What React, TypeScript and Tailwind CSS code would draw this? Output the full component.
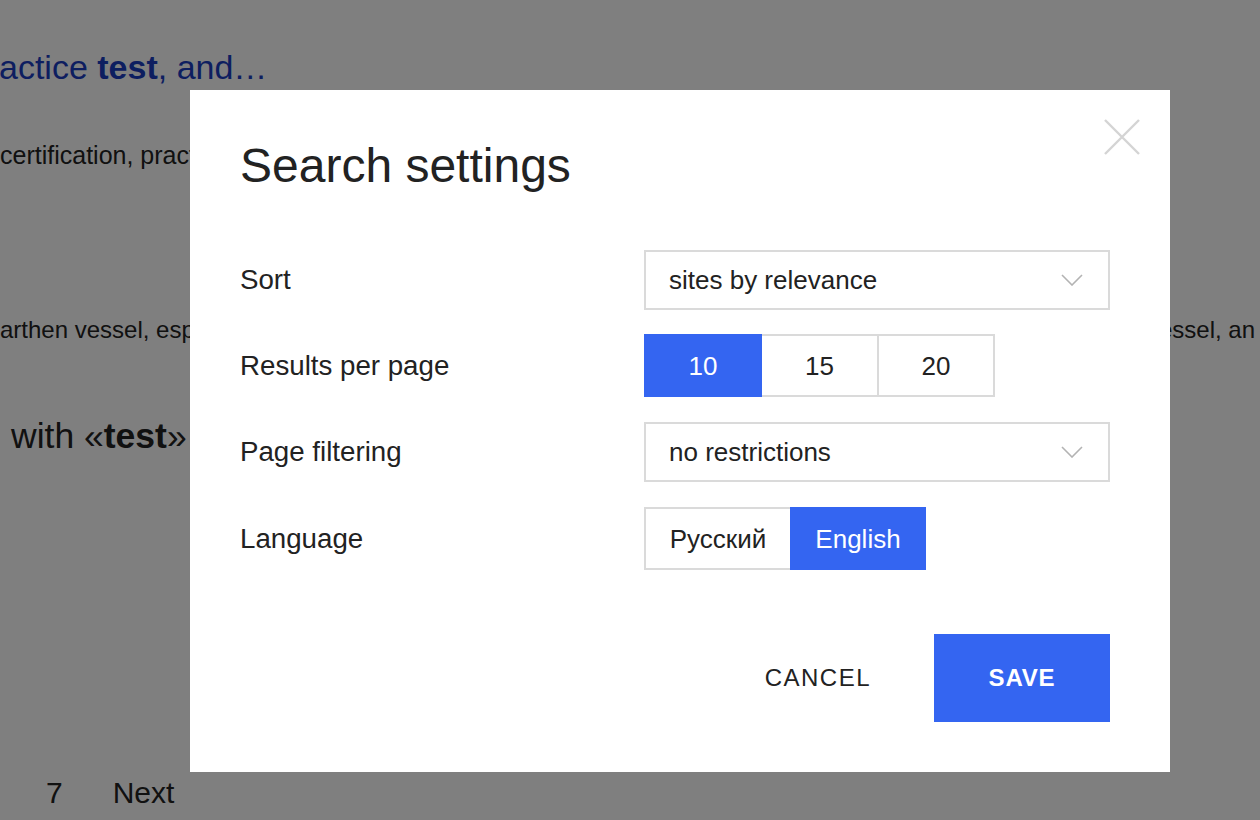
import React from "react";

const Chevron = () => (
  <svg width="22" height="12" viewBox="0 0 22 12" fill="none">
    <path d="M1 1 L11 11 L21 1" stroke="#b3b3b3" strokeWidth="1.6" />
  </svg>
);

const Select = ({ value }: { value: string }) => (
  <div className="flex h-[60px] w-[466px] items-center justify-between border-2 border-[#dadada] bg-white pl-[23px] pr-[25px] text-[26px] leading-none text-[#222]">
    <span>{value}</span>
    <Chevron />
  </div>
);

const Row = ({
  label,
  className,
  children,
}: {
  label: string;
  className?: string;
  children: React.ReactNode;
}) => (
  <div className={`flex items-center ${className ?? ""}`}>
    <div className="w-[404px] text-[27.7px] leading-none text-[#222]">{label}</div>
    {children}
  </div>
);

const App = () => {
  return (
    <div className="relative h-[820px] w-full overflow-hidden bg-white font-['Liberation_Sans',Arial,sans-serif]">
      {/* page behind the dialog */}
      <div className="flex flex-col whitespace-nowrap text-[#222]">
        <div className="-ml-[1px] mt-[50px] text-[34px] leading-none text-[#1a3dc1]">
          actice <b>test</b>, and…
        </div>
        <div className="mt-[59px] text-[25px] leading-none">certification, practice test</div>
        <div className="mt-[150px] flex justify-between text-[24px] leading-none">
          <span>arthen vessel, especially</span>
          <span className="mr-[5px]">vessel, an</span>
        </div>
        <div className="ml-[11px] mt-[77px] text-[35.5px] leading-none">
          with «<b>test</b>»
        </div>
        <div className="mt-[323px] flex text-[30px] leading-none">
          <span className="ml-[46px]">7</span>
          <span className="ml-[50px]">Next</span>
        </div>
      </div>

      {/* overlay */}
      <div className="absolute inset-0 bg-black/50 pl-[190px] pt-[90px]">
        <div className="relative h-[682px] w-[980px] bg-white pl-[50px] pr-[60px] pt-[52px]">
          <button className="absolute right-[30px] top-[29px]">
            <svg width="36" height="36" viewBox="0 0 36 36" fill="none">
              <path d="M1 1 L35 35 M35 1 L1 35" stroke="#d4d4d4" strokeWidth="2.4" />
            </svg>
          </button>

          <h1 className="text-[48px] leading-none text-[#222]">Search settings</h1>

          <Row label="Sort" className="mt-[60px]">
            <Select value="sites by relevance" />
          </Row>

          <Row label="Results per page" className="mt-[24px]">
            <div className="flex h-[63px] text-[26px] leading-none text-[#222]">
              <div className="flex w-[118px] items-center justify-center bg-[#3465f1] text-white">10</div>
              <div className="flex w-[117px] items-center justify-center border-y-2 border-r-2 border-[#dadada]">15</div>
              <div className="flex w-[116px] items-center justify-center border-y-2 border-r-2 border-[#dadada]">20</div>
            </div>
          </Row>

          <Row label="Page filtering" className="mt-[25px]">
            <Select value="no restrictions" />
          </Row>

          <Row label="Language" className="mt-[25px]">
            <div className="flex h-[63px] text-[26px] leading-none text-[#222]">
              <div className="flex w-[146px] items-center justify-center border-y-2 border-l-2 border-[#dadada]">Русский</div>
              <div className="flex w-[136px] items-center justify-center bg-[#3465f1] text-white">English</div>
            </div>
          </Row>

          <div className="mt-[64px] flex items-center justify-end gap-[63px]">
            <button className="text-[24px] leading-none tracking-[1.5px] text-[#222]">CANCEL</button>
            <button className="flex h-[88px] w-[176px] items-center justify-center bg-[#3465f1] text-[24px] font-bold leading-none tracking-[0.8px] text-white">
              SAVE
            </button>
          </div>
        </div>
      </div>
    </div>
  );
};

export default App;
